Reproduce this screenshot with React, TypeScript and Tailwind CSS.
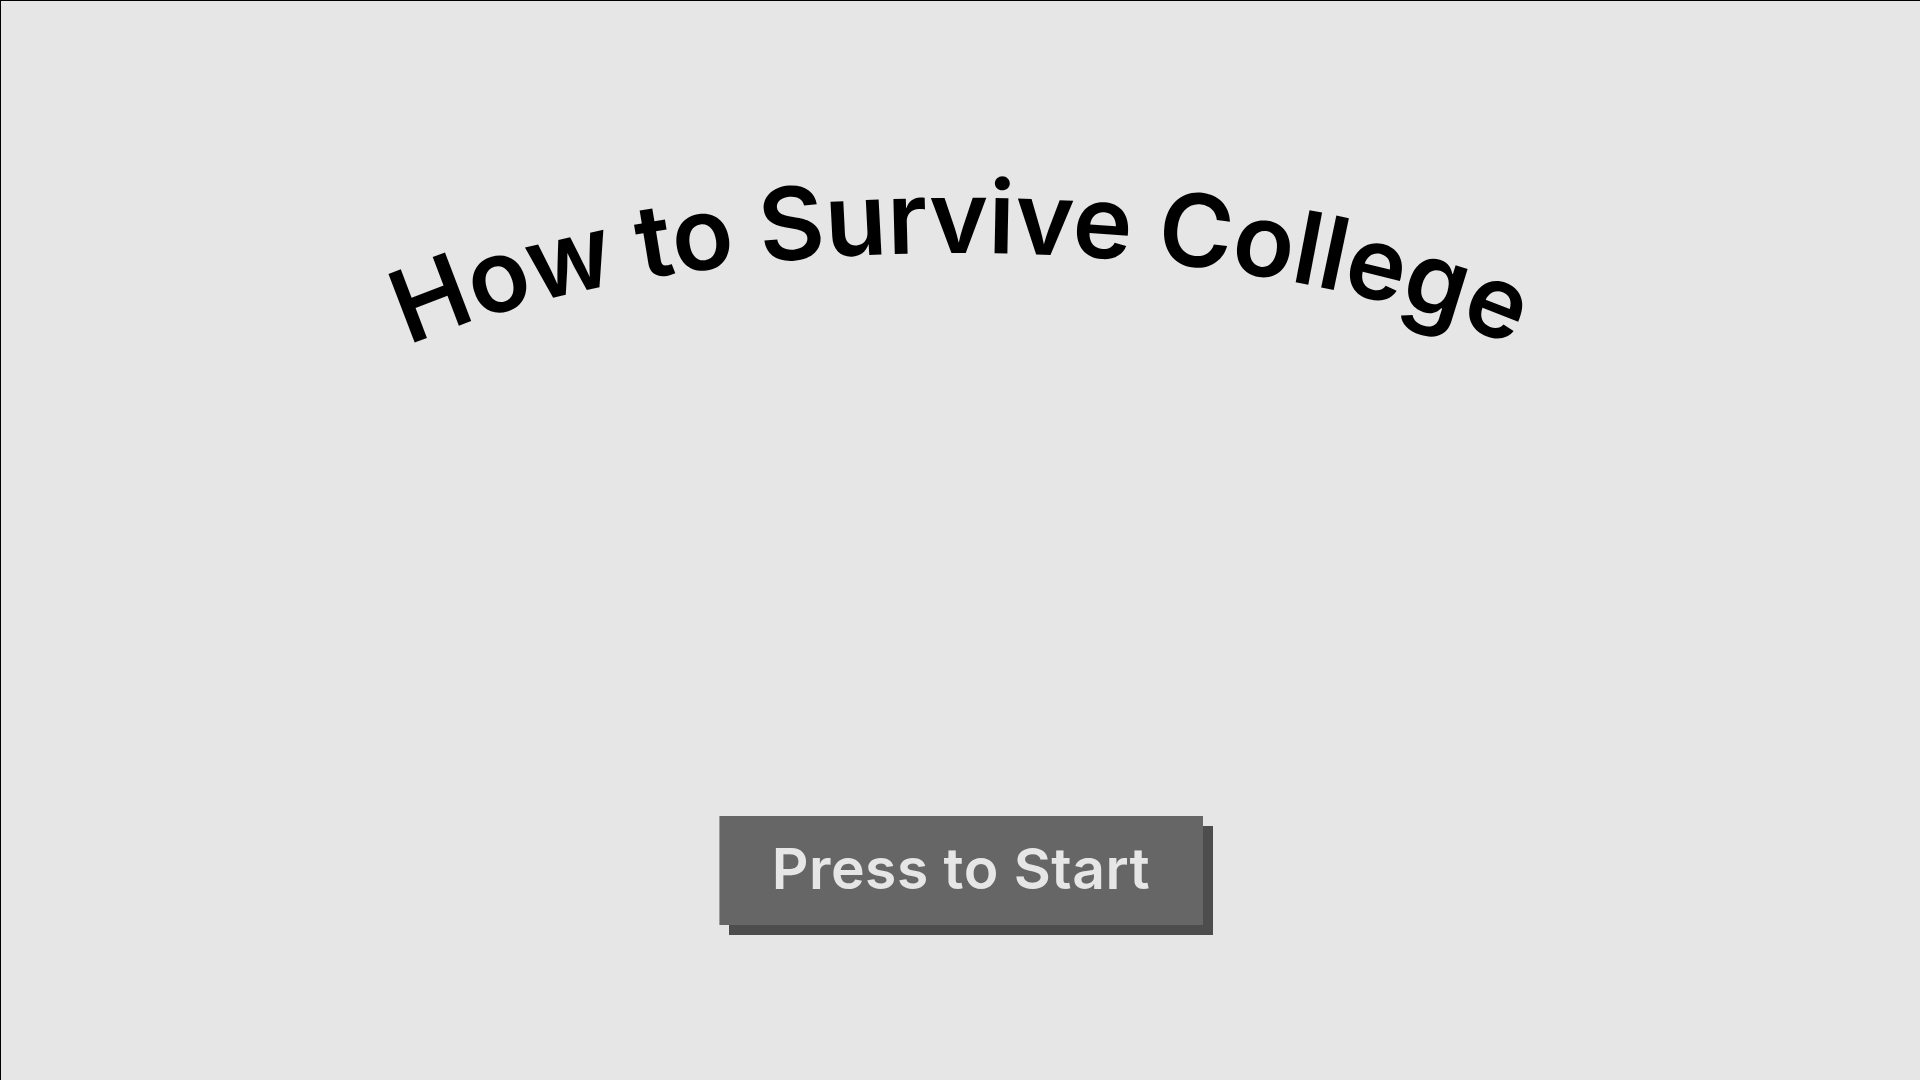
import React from 'react';

const TITLE = 'How to Survive College';

// arc under the title: a wide half-ellipse, flatter at the top than at the ends
const ARC = 'M 267 487 A 693 235 0 0 1 1653 487';

const CurvedTitle: React.FC = () => (
  <svg className="block w-full h-[400px]" viewBox="0 0 1920 400" xmlns="http://www.w3.org/2000/svg">
    <defs>
      <path id="title-arc" d={ARC} fill="none" />
    </defs>
    <text
      fill="#000000"
      fontSize="101"
      fontWeight="600"
      style={{ fontFamily: 'Inter, "Liberation Sans", sans-serif' }}
      textLength={1128}
      lengthAdjust="spacing"
    >
      <textPath href="#title-arc" startOffset="50%" textAnchor="middle">
        {TITLE}
      </textPath>
    </text>
  </svg>
);

const App: React.FC = () => {
  return (
    <div className="w-full h-screen bg-[#e6e6e6] border-t border-l border-black overflow-hidden">
      <CurvedTitle />
      <div className="flex justify-center mt-[415px]">
        <button
          type="button"
          className="flex items-center justify-center pb-1 w-[484px] h-[109px] bg-[#666666] border-l border-[#9a9a9a] text-[#e6e6e6] text-[57px] font-semibold tracking-[0.5px] shadow-[10px_10px_0_0_#4d4d4d] font-['Inter','Liberation_Sans',sans-serif]"
        >
          Press to Start
        </button>
      </div>
    </div>
  );
};

export default App;
